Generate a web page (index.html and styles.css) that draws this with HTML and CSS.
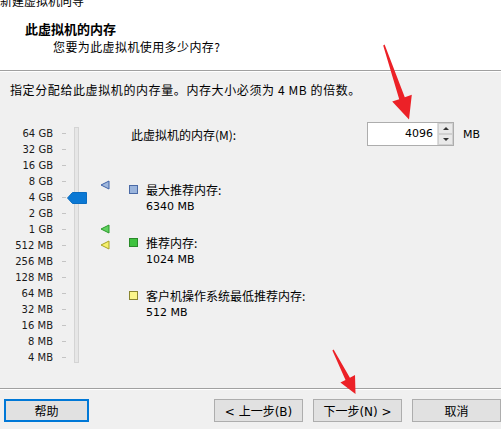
FILE: index.html
```html
<!DOCTYPE html>
<html lang="zh-CN">
<head>
  <meta charset="UTF-8">
  <title>新建虚拟机向导</title>
  <link rel="stylesheet" href="styles.css">
</head>
<body>
  <div class="dialog">
    <header class="banner">
      <div class="caption"><span>新建虚拟机向导</span></div>
      <div class="banner-title">此虚拟机的内存</div>
      <div class="banner-sub">您要为此虚拟机使用多少内存?</div>
    </header>

    <p class="intro">指定分配给此虚拟机的内存量。内存大小必须为 4 MB 的倍数。</p>

    <div class="main">
      <div class="slider">
        <ul class="scale">
          <li><span>64 GB</span><i></i></li>
          <li><span>32 GB</span><i></i></li>
          <li><span>16 GB</span><i></i></li>
          <li><span>8 GB</span><i></i></li>
          <li><span>4 GB</span><i></i></li>
          <li><span>2 GB</span><i></i></li>
          <li><span>1 GB</span><i></i></li>
          <li><span>512 MB</span><i></i></li>
          <li><span>256 MB</span><i></i></li>
          <li><span>128 MB</span><i></i></li>
          <li><span>64 MB</span><i></i></li>
          <li><span>32 MB</span><i></i></li>
          <li><span>16 MB</span><i></i></li>
          <li><span>8 MB</span><i></i></li>
          <li><span>4 MB</span><i></i></li>
        </ul>
        <div class="track">
          <svg class="thumb" width="20" height="12" viewBox="0 0 20 12">
            <path d="M0.5 6 L5.5 0.5 H19.5 V11.5 H5.5 Z" fill="#0a78d4" stroke="#0a6cc0"/>
          </svg>
        </div>
        <div class="markers">
          <svg class="marker" style="top: 60px" width="10" height="10" viewBox="0 0 10 10">
            <path d="M1 5 L9 1 V9 Z" fill="#9fb7dc" stroke="#3f62a8"/>
          </svg>
          <svg class="marker" style="top: 104px" width="10" height="10" viewBox="0 0 10 10">
            <path d="M1 5 L9 1 V9 Z" fill="#5fd05f" stroke="#2b9a2b"/>
          </svg>
          <svg class="marker" style="top: 120px" width="10" height="10" viewBox="0 0 10 10">
            <path d="M1 5 L9 1 V9 Z" fill="#f5f06a" stroke="#a8a228"/>
          </svg>
        </div>
      </div>

      <div class="info">
        <div class="mem-row">
          <label class="mem-label">此虚拟机的内存(M):</label>
          <div class="spin">
            <div class="spin-field">4096</div>
            <div class="spin-btns">
              <div class="spin-btn"><span class="up"></span></div>
              <div class="spin-btn"><span class="down"></span></div>
            </div>
          </div>
          <span class="unit">MB</span>
        </div>

        <div class="legend">
          <div class="legend-item">
            <span class="swatch swatch-max"></span>
            <div class="legend-text">
              <div>最大推荐内存:</div>
              <div class="num">6340 MB</div>
            </div>
          </div>
          <div class="legend-item">
            <span class="swatch swatch-rec"></span>
            <div class="legend-text">
              <div>推荐内存:</div>
              <div class="num">1024 MB</div>
            </div>
          </div>
          <div class="legend-item">
            <span class="swatch swatch-min"></span>
            <div class="legend-text">
              <div>客户机操作系统最低推荐内存:</div>
              <div class="num">512 MB</div>
            </div>
          </div>
        </div>
      </div>
    </div>

    <div class="footer">
      <button class="btn btn-help">帮助</button>
      <div class="nav">
        <button class="btn">&lt; 上一步(B)</button>
        <button class="btn">下一步(N) &gt;</button>
        <button class="btn">取消</button>
      </div>
    </div>

    <svg class="arrows" width="501" height="429" viewBox="0 0 501 429">
      <polygon fill="#ec2127" points="384.6,44.6 404.8,97.2 411.8,94.8 409,119.5 392.2,101.6 399.2,99.2 383.2,45.4"/>
      <polygon fill="#ec2127" points="333.6,349.6 349.9,377.7 355,375 355.5,394 340.4,382.6 345.5,379.9 332.4,350.4"/>
    </svg>
  </div>
</body>
</html>
```

FILE: styles.css
```css
* {
  box-sizing: border-box;
}
body {
  margin: 0;
  background: #f0f0f0;
  font-family: "DejaVu Sans", "Noto Sans CJK SC", sans-serif;
  font-size: 12px;
  color: #000;
  overflow: hidden;
}
.dialog {
  position: relative;
  width: 501px;
  height: 429px;
  overflow: hidden;
}

/* header */
.banner {
  background: #fff;
  height: 71px;
  border-bottom: 1px solid #a0a0a0;
  box-shadow: 0 1px 0 #fff;
  padding-bottom: 15px;
}
.caption {
  height: 9px;
  overflow: hidden;
}
.caption span {
  display: block;
  margin-top: -6px;
  line-height: 14px;
  font-family: "Noto Sans CJK SC", sans-serif;
  font-size: 12px;
}
.banner-title {
  margin: 12px 0 0 25px;
  line-height: 16px;
  font-family: "Noto Sans CJK SC", sans-serif;
  font-weight: bold;
  font-size: 13px;
}
.banner-sub {
  margin: 2px 0 0 53px;
  line-height: 16px;
  font-family: "Noto Sans CJK SC", sans-serif;
  font-size: 12px;
  letter-spacing: 0.4px;
}
.intro {
  margin: 11px 0 0 10px;
  line-height: 16px;
  font-size: 12px;
  letter-spacing: 0.6px;
  font-family: "Noto Sans CJK SC", sans-serif;
}

/* main area */
.main {
  display: flex;
  height: 268px;
  margin-top: 22px;
}
.slider {
  position: relative;
  display: flex;
  width: 129px;
  flex: none;
}
.scale {
  list-style: none;
  margin: 0;
  padding: 5px 0 0;
  width: 74px;
}
.scale li {
  display: flex;
  align-items: center;
  height: 16px;
}
.scale li span {
  width: 53px;
  text-align: right;
  font-size: 10px;
  color: #1a1a1a;
}
.scale li i {
  width: 4px;
  height: 1px;
  margin-left: 9px;
  background: #c4c4c4;
}
.track {
  position: relative;
  width: 5px;
  height: 236px;
  margin-top: 7px;
  background: #e6e6e6;
  border: 1px solid #d4d4d4;
}
.thumb {
  position: absolute;
  left: -8px;
  top: 64px;
}
.markers {
  position: relative;
  margin-left: 21px;
  width: 10px;
}
.marker {
  position: absolute;
  left: 0;
}

.info {
  flex: 1;
}
.mem-row {
  display: flex;
  align-items: center;
  height: 24px;
  margin-top: 2px;
}
.mem-label {
  width: 238px;
  padding-left: 2px;
  font-family: "Noto Sans CJK SC", sans-serif;
  font-size: 12px;
}
.spin {
  display: flex;
  height: 24px;
  border: 1px solid #adadad;
  background: #fff;
}
.spin-field {
  width: 69px;
  padding-right: 4px;
  text-align: right;
  line-height: 22px;
  font-size: 11px;
}
.spin-btns {
  display: flex;
  flex-direction: column;
  width: 16px;
  background: #f0f0f0;
  border-left: 1px solid #dcdcdc;
}
.spin-btn {
  flex: 1;
  display: flex;
  align-items: center;
  justify-content: center;
  background: #e9e9e9;
  border: 1px solid #d0d0d0;
}
.up {
  width: 0;
  height: 0;
  border-left: 3px solid transparent;
  border-right: 3px solid transparent;
  border-bottom: 3px solid #333;
}
.down {
  width: 0;
  height: 0;
  border-left: 3px solid transparent;
  border-right: 3px solid transparent;
  border-top: 3px solid #333;
}
.unit {
  margin-left: 9px;
  font-size: 11px;
}

.legend {
  display: flex;
  flex-direction: column;
  gap: 19px;
  margin-top: 35px;
}
.legend-item {
  display: flex;
}
.legend-text {
  margin-left: 8px;
  line-height: 17px;
  font-family: "Noto Sans CJK SC", sans-serif;
  font-size: 12px;
}
.legend-text .num {
  font-family: "DejaVu Sans", sans-serif;
  font-size: 11px;
}
.swatch {
  width: 9px;
  height: 9px;
  margin-top: 4px;
  border: 1px solid #555;
}
.swatch-max {
  background: #9ab4dc;
  border-color: #4a6aa6;
}
.swatch-rec {
  background: #3fc23f;
  border-color: #2a8a2a;
}
.swatch-min {
  background: #fbf68a;
  border-color: #8a8630;
}

/* footer */
.footer {
  display: flex;
  border-top: 1px solid #a0a0a0;
  box-shadow: inset 0 1px 0 #fff;
  padding: 10px 0 0 4px;
}
.btn {
  width: 89px;
  height: 23px;
  padding: 0;
  background: #e1e1e1;
  border: 1px solid #adadad;
  font-family: "DejaVu Sans", "Noto Sans CJK SC", sans-serif;
  font-size: 12px;
  color: #000;
}
.btn-help {
  width: 88px;
  border: 2px solid #0078d7;
}
.nav {
  display: flex;
  gap: 10px;
  margin-left: 125px;
  flex: none;
}

.arrows {
  position: absolute;
  left: 0;
  top: 0;
  pointer-events: none;
}
```
